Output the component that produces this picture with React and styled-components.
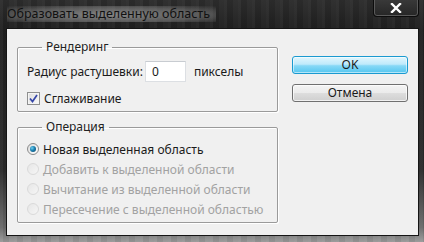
import React from 'react'
import styled, { createGlobalStyle } from 'styled-components'

const Global = createGlobalStyle`
  html, body { margin: 0; padding: 0; background: #1b1b1b; }
  body { width: 424px; height: 242px; overflow: hidden; }
`

const Window = styled.div`
  width: 424px;
  height: 242px;
  display: flex;
  flex-direction: column;
  font-family: "Noto Sans", "Open Sans", sans-serif;
  font-size: 12px;
  color: #1b1b1b;
  background:
    repeating-linear-gradient(90deg, rgba(255,255,255,0.035) 0 3px, rgba(0,0,0,0.05) 3px 9px, rgba(255,255,255,0.02) 9px 14px),
    linear-gradient(180deg, #2d2d2d 0%, #202020 12%, #2a2a2a 70%, #6a6a6a 94%, #9a9a9a 100%);
`

const TitleBar = styled.div`
  height: 28px;
  display: flex;
  align-items: flex-start;
  justify-content: space-between;
  padding-left: 7px;
  padding-right: 5px;
`

const Title = styled.div`
  margin-top: 6px;
  font-size: 12.5px;
  line-height: 16px;
  color: #111;
  padding: 0 6px 0 0;
  background: radial-gradient(ellipse at 50% 55%, rgba(150,150,150,0.85) 0%, rgba(130,130,130,0.55) 60%, rgba(120,120,120,0) 100%);
`

const CloseButton = styled.div`
  width: 46px;
  height: 18px;
  margin-top: -1px;
  box-sizing: border-box;
  border: 1px solid #0c0c0c;
  border-top: none;
  border-radius: 0 0 4px 4px;
  box-shadow: inset 0 0 0 1px #5a5a5a;
  background: linear-gradient(180deg, #3a3a3a, #262626);
  display: flex;
  align-items: center;
  justify-content: center;
  svg { display: block; }
`

const Client = styled.div`
  flex: 1;
  margin: 0 5px 6px 6px;
  border: 1px solid #151515;
  background: #f0f0f0;
  display: flex;
  padding: 10px 10px 0 10px;
`

const LeftCol = styled.div`
  width: 261px;
  display: flex;
  flex-direction: column;
`

const Group = styled.fieldset`
  margin: ${p => (p.$first ? '0' : '7px 0 0')};
  padding: ${p => p.$pad};
  border: 1px solid #9a9a9a;
  border-radius: 2px;
  box-shadow: 1px 1px 0 #fff, inset 1px 1px 0 #fff;
  min-width: 0;
`

const Legend = styled.legend`
  margin-left: 15px;
  padding: 0 4px;
  line-height: 16px;
  color: #222;
`

const Row = styled.div`
  display: flex;
  align-items: center;
  height: ${p => p.$h || 20}px;
  margin-top: ${p => p.$mt || 0}px;
  color: ${p => (p.$disabled ? '#a2a2a2' : '#1b1b1b')};
  white-space: nowrap;
`

const Input = styled.div`
  width: 41px;
  height: 21px;
  box-sizing: border-box;
  margin: 0 8px 0 2px;
  padding-left: 6px;
  background: #fff;
  border: 1px solid #dcdfe3;
  border-top-color: #c8ccd1;
  display: flex;
  align-items: center;
`

const CheckBox = styled.div`
  width: 13px;
  height: 13px;
  box-sizing: border-box;
  border: 1px solid #8e8f8f;
  background: linear-gradient(135deg, #dcdcdc, #fbfbfb);
  box-shadow: inset 0 0 0 1px #f4f4f4;
  margin-right: 4px;
  display: flex;
  align-items: center;
  justify-content: center;
`

const Radio = styled.div`
  width: 12px;
  height: 12px;
  box-sizing: border-box;
  border-radius: 50%;
  margin: 0 4px 0 0;
  border: 1px solid ${p => (p.$disabled ? '#dadada' : '#8a8a8a')};
  background: ${p => (p.$disabled ? 'linear-gradient(135deg, #e6e6e6, #f6f6f6)' : 'linear-gradient(135deg, #dcdcdc, #ffffff)')};
  display: flex;
  align-items: center;
  justify-content: center;
  &::after {
    content: '';
    display: ${p => (p.$checked ? 'block' : 'none')};
    width: 6px;
    height: 6px;
    border-radius: 50%;
    background: radial-gradient(circle at 35% 35%, #6fd0f0 0%, #1a7fb0 45%, #0b3f5f 100%);
  }
`

const RightCol = styled.div`
  margin-left: 14px;
  padding-top: 17px;
  display: flex;
  flex-direction: column;
  gap: 10px;
`

const Button = styled.div`
  width: 116px;
  height: 18px;
  box-sizing: border-box;
  border-radius: 3px;
  display: flex;
  align-items: center;
  justify-content: center;
  line-height: 16px;
  color: #1b1b1b;
  border: 1px solid ${p => (p.$primary ? '#1a9ad0' : '#707070')};
  background: ${p =>
    p.$primary
      ? 'linear-gradient(180deg, #e2f6fd 0%, #bfeafb 45%, #86d8f6 55%, #55c6f0 100%)'
      : 'linear-gradient(180deg, #f4f4f4 0%, #ebebeb 48%, #dddddd 52%, #cfcfcf 100%)'};
  box-shadow: inset 0 0 0 1px ${p => (p.$primary ? 'rgba(255,255,255,0.55)' : 'rgba(255,255,255,0.7)')};
`

const Check = () => (
  <svg width="9" height="9" viewBox="0 0 9 9">
    <path d="M1 4.5 L3.5 7.5 L8 1" fill="none" stroke="#3546a8" strokeWidth="1.7" />
  </svg>
)

const options = [
  { label: 'Новая выделенная область', checked: true },
  { label: 'Добавить к выделенной области', disabled: true },
  { label: 'Вычитание из выделенной области', disabled: true },
  { label: 'Пересечение с выделенной областью', disabled: true },
]

export default function App() {
  return (
    <Window>
      <Global />
      <TitleBar>
        <Title>Образовать выделенную область</Title>
        <CloseButton>
          <svg width="12" height="10" viewBox="0 0 12 10">
            <path d="M2 1 L10 9 M10 1 L2 9" stroke="#fff" strokeWidth="2.4" strokeLinecap="square" />
          </svg>
        </CloseButton>
      </TitleBar>
      <Client>
        <LeftCol>
          <Group $first $pad="0 9px 5px 9px">
            <Legend>Рендеринг</Legend>
            <Row $h={21} $mt={6}>
              Радиус растушевки:
              <Input>0</Input>
              пикселы
            </Row>
            <Row $h={16} $mt={8}>
              <CheckBox><Check /></CheckBox>
              Сглаживание
            </Row>
          </Group>
          <Group $pad="4px 9px 3px 9px">
            <Legend>Операция</Legend>
            {options.map(o => (
              <Row key={o.label} $disabled={o.disabled}>
                <Radio $checked={o.checked} $disabled={o.disabled} />
                {o.label}
              </Row>
            ))}
          </Group>
        </LeftCol>
        <RightCol>
          <Button $primary>OK</Button>
          <Button>Отмена</Button>
        </RightCol>
      </Client>
    </Window>
  )
}
